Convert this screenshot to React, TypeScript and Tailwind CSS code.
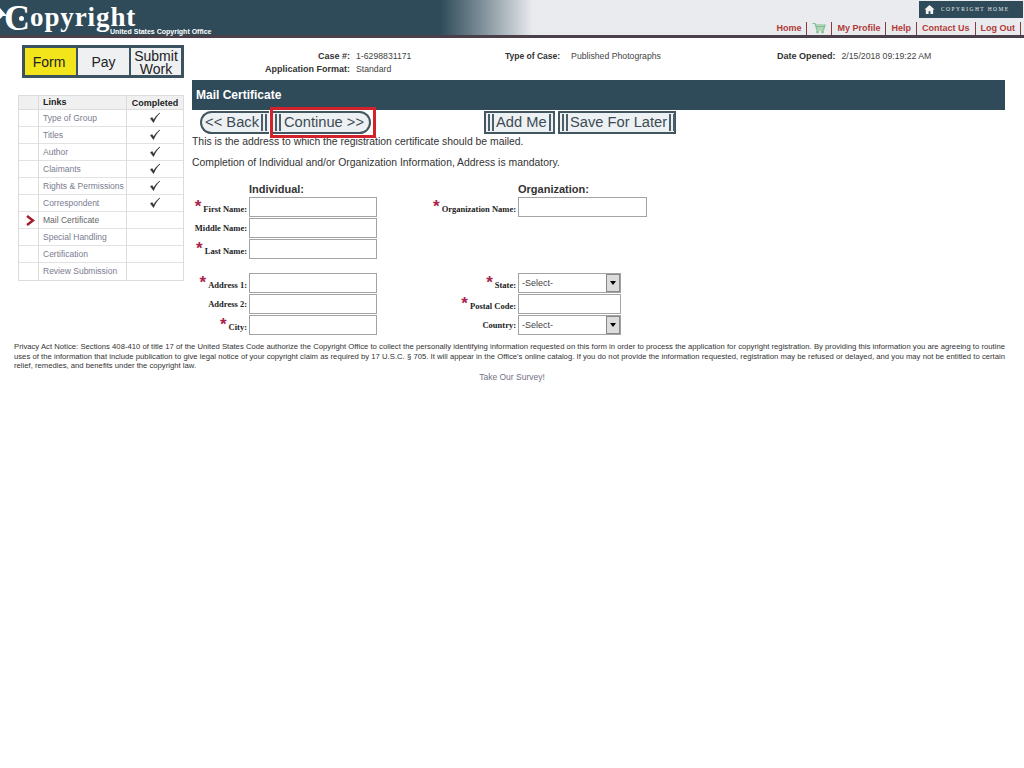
import { ReactNode } from "react";

const links = [
  { name: "Type of Group", done: true },
  { name: "Titles", done: true },
  { name: "Author", done: true },
  { name: "Claimants", done: true },
  { name: "Rights & Permissions", done: true },
  { name: "Correspondent", done: true },
  { name: "Mail Certificate", done: false, current: true },
  { name: "Special Handling", done: false },
  { name: "Certification", done: false },
  { name: "Review Submission", done: false },
];

const sans = "font-['Liberation_Sans',Arial,sans-serif]";
const serif = "font-['Liberation_Serif','Times_New_Roman',serif]";

function Check() {
  return (
    <svg width="12" height="12" viewBox="0 0 12 12" className="mx-auto">
      <path d="M1.5 6.5 L4.5 10.5 C6 7 8 3.5 11 1 C8 3 6 5.5 4.6 8 L3.2 5.6 Z" fill="#2e3338" stroke="#2e3338" strokeWidth="0.6" />
    </svg>
  );
}

function Bars() {
  return <span className="inline-flex gap-[2px] h-[17px] mx-[2px] shrink-0"><i className="block w-[2px] h-full bg-[#4a5f6a]" /><i className="block w-[2px] h-full bg-[#4a5f6a]" /></span>;
}

function NavSep() {
  return <span className="w-px h-[13px] bg-[#8a3a3a]" />;
}

function Req({ label, star = true }: { label: string; star?: boolean }) {
  return (
    <span className={`${serif} text-[8.5px] font-bold text-[#222] whitespace-nowrap flex items-end justify-end pr-[2px] h-full ${star ? "pb-[1px]" : "pb-[3px]"}`}>
      {star && <span className={`${sans} text-[#a8244a] text-[17px] leading-[13px] mr-[2px] self-start mt-[3px]`}>*</span>}
      {label}
    </span>
  );
}

function Box({ w = "w-[128px]" }: { w?: string }) {
  return <div className={`${w} h-[20px] border border-[#a3a3a3] bg-white`} />;
}

function Select() {
  return (
    <div className={`w-[103px] h-[20px] border border-[#a3a3a3] bg-white flex items-center justify-between ${sans} text-[9px] text-[#444] pl-[3px]`}>
      <span className="mt-[1px]">-Select-</span>
      <span className="w-[14px] h-[18px] bg-[#dcdcdc] border border-[#888] flex items-center justify-center">
        <span className="w-0 h-0 border-x-[3px] border-x-transparent border-t-[4px] border-t-black" />
      </span>
    </div>
  );
}

function Row({ labelW, label, star, children, className = "" }: { labelW: string; label: string; star?: boolean; children: ReactNode; className?: string }) {
  return (
    <div className={`flex h-[20px] ${className}`}>
      <div className={labelW}><Req label={label} star={star} /></div>
      {children}
    </div>
  );
}

export default function App() {
  return (
    <div className={`min-h-screen bg-white relative ${sans} text-[#333]`}>
      {/* banner */}
      <header className="h-[38px] flex justify-between border-b-[3px] border-[#4b3f49] bg-gradient-to-r from-[#2f4b59] via-[#2f4b59] via-[43%] to-[#e9ebee] to-[52%] relative">
        <div className={`${serif} text-white font-bold text-[27px] leading-none flex items-start pl-[4px] pt-[4px] relative`}>
          <span className="text-[36px] leading-[28px]">C</span>
          <span className="leading-[22px] mt-[2px] tracking-[0.9px]">opyright</span>
          <span className="absolute left-[19px] top-[16px] w-[5px] h-[5px] rounded-full bg-white" />
          <span className={`${sans} absolute left-[110px] top-[28px] text-[7px] leading-[7px] whitespace-nowrap`}>United States Copyright Office</span>
        </div>
        <div className="flex flex-col items-end">
          <div className="w-[104px] h-[17px] mt-[1px] mr-[1px] bg-[#2f4b59] flex items-center pl-[5px] gap-[6px]">
            <svg width="11" height="11" viewBox="0 0 12 12"><path d="M6 1 L0.5 6 L2 6 L2 11 L5 11 L5 8 L7 8 L7 11 L10 11 L10 6 L11.5 6 Z" fill="#f2f2f2" /></svg>
            <span className={`${serif} text-[5.5px] text-[#e6e9ea] tracking-[1.4px] whitespace-nowrap`}>COPYRIGHT HOME</span>
          </div>
          <nav className="flex items-center gap-[5px] text-[9px] font-bold text-[#b23a3a] mt-[4px] pr-[3px] whitespace-nowrap">
            <span>Home</span>
            <NavSep />
            <svg width="14" height="12" viewBox="0 0 14 12" fill="none" stroke="#7fbf8e" strokeWidth="1.2">
              <path d="M0.5 1.5 H3 L5 8 H11.5 L13 3 H3.5" />
              <path d="M4 4.5 H12.5 M4.5 6 H12" />
              <circle cx="5.5" cy="10" r="0.8" />
              <circle cx="10.5" cy="10" r="0.8" />
            </svg>
            <NavSep />
            <span>My Profile</span>
            <NavSep />
            <span>Help</span>
            <NavSep />
            <span>Contact Us</span>
            <NavSep />
            <span>Log Out</span>
            <NavSep />
          </nav>
        </div>
        <svg width="9" height="14" viewBox="0 0 9 14" className="absolute left-0 top-[8px]"><path d="M0 0 L7 8 L3 8 L0 11 Z" fill="#fff" /></svg>
      </header>

      <div className="flex pl-[18px]">
        {/* left column */}
        <aside className="w-[166px] shrink-0 pt-[7px]">
          <div className="ml-[4px] w-[162px] h-[33px] border-[3px] border-[#3b5260] bg-[#3b5260] flex gap-[2px] text-[#222]">
            <div className="w-[51px] bg-[#f3e51c] flex items-center justify-center text-[14px] pr-[3px] pt-[2px]">Form</div>
            <div className="w-[51px] bg-[#eef0f2] flex items-center justify-center text-[14px] pt-[2px]">Pay</div>
            <div className="flex-1 bg-[#eef0f2] flex flex-col items-center justify-center text-[14px] leading-[13px] text-center pt-[2px]">
              <span className="block h-[13px]">Submit</span>
              <span className="block h-[13px]">Work</span>
            </div>
          </div>
          <div className="mt-[17px] border border-[#dcdcdc] text-[8.5px]">
            <div className="grid grid-cols-[20px_87px_1fr] h-[14px] bg-[#f0f0f0] border-b border-[#dcdcdc] font-bold text-[9px] text-[#222] items-center">
              <span className="h-full border-r border-[#dcdcdc]" />
              <span className="pl-[4px]">Links</span>
              <span className="h-full border-l border-[#dcdcdc] text-center leading-[14px]">Completed</span>
            </div>
            {links.map((l) => (
              <div key={l.name} className="grid grid-cols-[20px_87px_1fr] h-[17px] border-b border-[#e2e2e2] last:border-b-0 items-center">
                <span className="h-full border-r border-[#dcdcdc] flex items-center justify-center pl-[4px]">
                  {l.current && (
                    <svg width="9" height="11" viewBox="0 0 9 11"><path d="M1 1 L7 5.5 L1 10" fill="none" stroke="#a31c2c" strokeWidth="2.4" /></svg>
                  )}
                </span>
                <span className={`pl-[4px] whitespace-nowrap ${l.current ? "text-[#666]" : "text-[#7a7c90]"}`}>{l.name}</span>
                <span className="h-full border-l border-[#dcdcdc] flex items-center">{l.done && <Check />}</span>
              </div>
            ))}
          </div>
        </aside>

        {/* main column */}
        <main className="ml-[8px] w-[813px]">
          <div className="h-[42px] relative text-[8.7px] text-[#444]">
            <div className="grid grid-cols-[158px_auto] gap-x-[6px] gap-y-[2px] pt-[13px] leading-[11px] w-fit">
              <b className="text-right text-[#333] text-[9px]">Case #:</b><span>1-6298831171</span>
              <b className="text-right text-[#333] text-[9px]">Application Format:</b><span>Standard</span>
            </div>
            <div className="absolute left-[313px] top-[13px] leading-[11px] whitespace-nowrap"><b className="text-[#333] text-[8.5px] mr-[11px]">Type of Case:</b>Published Photographs</div>
            <div className="absolute left-[585px] top-[13px] leading-[11px] whitespace-nowrap"><b className="text-[#333] text-[9px] mr-[6px]">Date Opened:</b>2/15/2018 09:19:22 AM</div>
          </div>
          <div className="h-[30px] bg-[#2f4b59] text-white font-bold text-[12px] flex items-center pl-[4px]">Mail Certificate</div>

          <div className="flex items-center h-[23px] mt-[1px] text-[14.7px] text-[#3d4b54] pl-[8px] relative whitespace-nowrap">
            <div className="w-[69px] h-[23px] border-2 border-[#41565f] rounded-l-full bg-[#edf1f3] flex items-center justify-end border-r-0">&lt;&lt; Back<Bars /></div>
            <div className="w-[101px] h-[23px] ml-[1px] pl-[3px] border-2 border-[#41565f] rounded-r-full bg-[#edf1f3] flex items-center border-l-0"><Bars /><span className="ml-[1px]">Continue &gt;&gt;</span></div>
            <div className="ml-[113px] h-[23px] w-[71px] border-2 border-[#41565f] bg-[#edf1f3] flex items-center justify-between"><Bars />Add Me<Bars /></div>
            <div className="ml-[3px] h-[23px] w-[118px] border-2 border-[#41565f] bg-[#edf1f3] flex items-center justify-between"><Bars />Save For Later<Bars /></div>
            <div className="absolute left-[78px] top-[-4px] w-[106px] h-[31px] border-[3px] border-[#d2222b]" />
          </div>

          <p className="text-[10.4px] text-[#333] leading-[12px] mt-[2px]">This is the address to which the registration certificate should be mailed.</p>
          <p className="text-[10.4px] text-[#333] leading-[12px] mt-[9px]">Completion of Individual and/or Organization Information, Address is mandatory.</p>

          {/* form */}
          <div className="flex mt-[14px]">
            <div className="w-[185px]">
              <div className="pl-[57px] h-[14px] font-bold text-[11px] leading-[12px] text-[#333]">Individual:</div>
              <div className="flex flex-col gap-[1px]">
                <Row labelW="w-[57px]" label="First Name:"><Box /></Row>
                <Row labelW="w-[57px]" label="Middle Name:" star={false}><Box /></Row>
                <Row labelW="w-[57px]" label="Last Name:"><Box /></Row>
                <Row labelW="w-[57px]" label="Address 1:" className="mt-[13px]"><Box /></Row>
                <Row labelW="w-[57px]" label="Address 2:" star={false}><Box /></Row>
                <Row labelW="w-[57px]" label="City:"><Box /></Row>
              </div>
            </div>
            <div>
              <div className="pl-[141px] h-[14px] font-bold text-[11px] leading-[12px] text-[#333]">Organization:</div>
              <div className="flex flex-col gap-[1px]">
                <Row labelW="w-[141px]" label="Organization Name:"><Box w="w-[129px]" /></Row>
                <div className="h-[54px]" />
                <Row labelW="w-[141px]" label="State:"><Select /></Row>
                <Row labelW="w-[141px]" label="Postal Code:"><Box w="w-[103px]" /></Row>
                <Row labelW="w-[141px]" label="Country:" star={false}><Select /></Row>
              </div>
            </div>
          </div>
        </main>
      </div>

      <p className="mt-[7px] ml-[14px] w-[991px] text-[7.7px] leading-[9.5px] text-[#333] text-justify">
        Privacy Act Notice: Sections 408-410 of title 17 of the United States Code authorize the Copyright Office to collect the personally identifying information requested on this form in order to process the application for copyright registration. By providing this information you are agreeing to routine uses of the information that include publication to give legal notice of your copyright claim as required by 17 U.S.C. § 705. It will appear in the Office's online catalog. If you do not provide the information requested, registration may be refused or delayed, and you may not be entitled to certain relief, remedies, and benefits under the copyright law.
      </p>
      <p className="mt-[1px] text-center text-[8.5px] text-[#6f7186] leading-[11px]">Take Our Survey!</p>
    </div>
  );
}
